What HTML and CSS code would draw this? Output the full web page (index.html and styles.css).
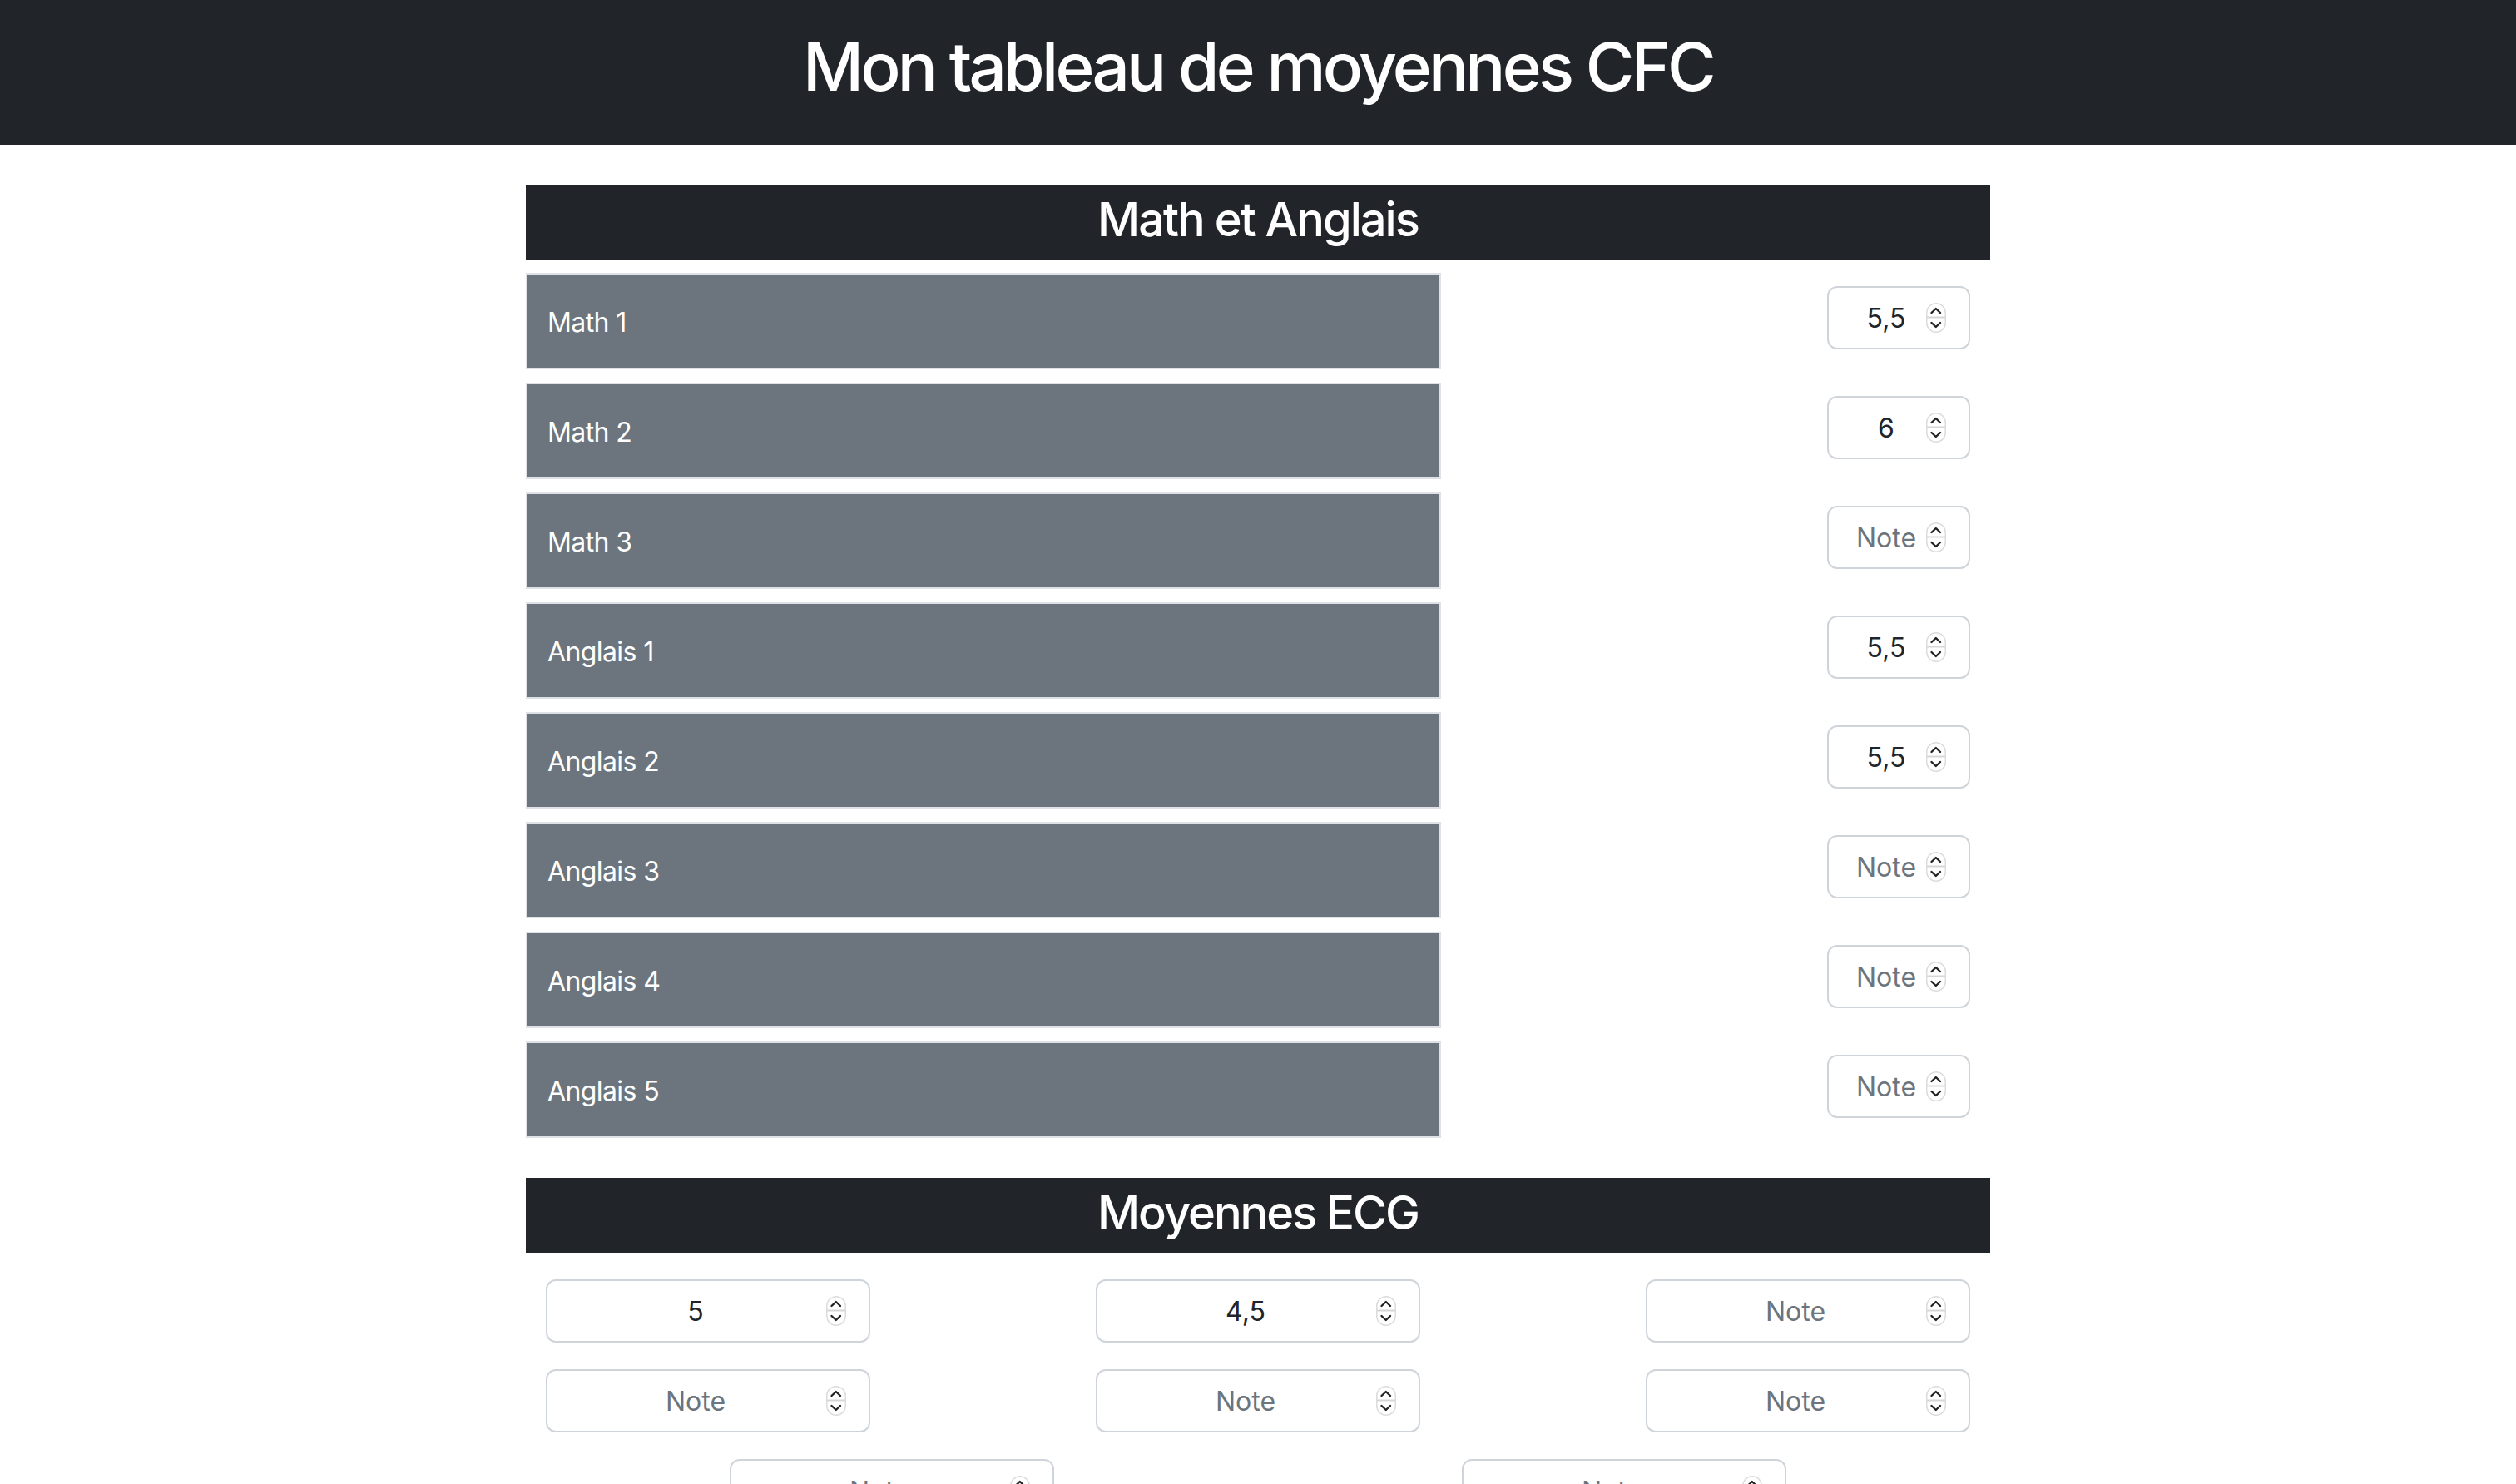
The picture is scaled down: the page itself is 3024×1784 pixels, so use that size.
FILE: index.html
```html
<!DOCTYPE html>
<html lang="fr">
<head>
<meta charset="utf-8">
<title>Mon tableau de moyennes CFC</title>
<link rel="stylesheet" href="styles.css">
</head>
<body>
<header class="topbar">
  <h1 class="title">Mon tableau de moyennes CFC</h1>
</header>
<main class="page">
  <section class="block">
    <h2 class="block-title">Math et Anglais</h2>
    <div class="subject-list">
      <div class="subject-row">
        <div class="subject-label">Math 1</div>
        <div class="note-field small"><input class="note-input" type="text" value="5,5" placeholder="Note"><svg class="spin" viewBox="0 0 24 36"><rect x="0.75" y="0.75" width="22.5" height="34.5" rx="11.25" fill="#fff" stroke="#dcdcdc" stroke-width="1.5"/><line x1="1" y1="17.5" x2="23" y2="17.5" stroke="#d6d6d6" stroke-width="2"/><polyline points="6.5,12 11.8,7 17,12" fill="none" stroke="#222" stroke-width="2.4" stroke-linecap="round" stroke-linejoin="round"/><polyline points="6.5,24 11.8,29 17,24" fill="none" stroke="#222" stroke-width="2.4" stroke-linecap="round" stroke-linejoin="round"/></svg></div>
      </div>
      <div class="subject-row">
        <div class="subject-label">Math 2</div>
        <div class="note-field small"><input class="note-input" type="text" value="6" placeholder="Note"><svg class="spin" viewBox="0 0 24 36"><rect x="0.75" y="0.75" width="22.5" height="34.5" rx="11.25" fill="#fff" stroke="#dcdcdc" stroke-width="1.5"/><line x1="1" y1="17.5" x2="23" y2="17.5" stroke="#d6d6d6" stroke-width="2"/><polyline points="6.5,12 11.8,7 17,12" fill="none" stroke="#222" stroke-width="2.4" stroke-linecap="round" stroke-linejoin="round"/><polyline points="6.5,24 11.8,29 17,24" fill="none" stroke="#222" stroke-width="2.4" stroke-linecap="round" stroke-linejoin="round"/></svg></div>
      </div>
      <div class="subject-row">
        <div class="subject-label">Math 3</div>
        <div class="note-field small"><input class="note-input" type="text" value="" placeholder="Note"><svg class="spin" viewBox="0 0 24 36"><rect x="0.75" y="0.75" width="22.5" height="34.5" rx="11.25" fill="#fff" stroke="#dcdcdc" stroke-width="1.5"/><line x1="1" y1="17.5" x2="23" y2="17.5" stroke="#d6d6d6" stroke-width="2"/><polyline points="6.5,12 11.8,7 17,12" fill="none" stroke="#222" stroke-width="2.4" stroke-linecap="round" stroke-linejoin="round"/><polyline points="6.5,24 11.8,29 17,24" fill="none" stroke="#222" stroke-width="2.4" stroke-linecap="round" stroke-linejoin="round"/></svg></div>
      </div>
      <div class="subject-row">
        <div class="subject-label">Anglais 1</div>
        <div class="note-field small"><input class="note-input" type="text" value="5,5" placeholder="Note"><svg class="spin" viewBox="0 0 24 36"><rect x="0.75" y="0.75" width="22.5" height="34.5" rx="11.25" fill="#fff" stroke="#dcdcdc" stroke-width="1.5"/><line x1="1" y1="17.5" x2="23" y2="17.5" stroke="#d6d6d6" stroke-width="2"/><polyline points="6.5,12 11.8,7 17,12" fill="none" stroke="#222" stroke-width="2.4" stroke-linecap="round" stroke-linejoin="round"/><polyline points="6.5,24 11.8,29 17,24" fill="none" stroke="#222" stroke-width="2.4" stroke-linecap="round" stroke-linejoin="round"/></svg></div>
      </div>
      <div class="subject-row">
        <div class="subject-label">Anglais 2</div>
        <div class="note-field small"><input class="note-input" type="text" value="5,5" placeholder="Note"><svg class="spin" viewBox="0 0 24 36"><rect x="0.75" y="0.75" width="22.5" height="34.5" rx="11.25" fill="#fff" stroke="#dcdcdc" stroke-width="1.5"/><line x1="1" y1="17.5" x2="23" y2="17.5" stroke="#d6d6d6" stroke-width="2"/><polyline points="6.5,12 11.8,7 17,12" fill="none" stroke="#222" stroke-width="2.4" stroke-linecap="round" stroke-linejoin="round"/><polyline points="6.5,24 11.8,29 17,24" fill="none" stroke="#222" stroke-width="2.4" stroke-linecap="round" stroke-linejoin="round"/></svg></div>
      </div>
      <div class="subject-row">
        <div class="subject-label">Anglais 3</div>
        <div class="note-field small"><input class="note-input" type="text" value="" placeholder="Note"><svg class="spin" viewBox="0 0 24 36"><rect x="0.75" y="0.75" width="22.5" height="34.5" rx="11.25" fill="#fff" stroke="#dcdcdc" stroke-width="1.5"/><line x1="1" y1="17.5" x2="23" y2="17.5" stroke="#d6d6d6" stroke-width="2"/><polyline points="6.5,12 11.8,7 17,12" fill="none" stroke="#222" stroke-width="2.4" stroke-linecap="round" stroke-linejoin="round"/><polyline points="6.5,24 11.8,29 17,24" fill="none" stroke="#222" stroke-width="2.4" stroke-linecap="round" stroke-linejoin="round"/></svg></div>
      </div>
      <div class="subject-row">
        <div class="subject-label">Anglais 4</div>
        <div class="note-field small"><input class="note-input" type="text" value="" placeholder="Note"><svg class="spin" viewBox="0 0 24 36"><rect x="0.75" y="0.75" width="22.5" height="34.5" rx="11.25" fill="#fff" stroke="#dcdcdc" stroke-width="1.5"/><line x1="1" y1="17.5" x2="23" y2="17.5" stroke="#d6d6d6" stroke-width="2"/><polyline points="6.5,12 11.8,7 17,12" fill="none" stroke="#222" stroke-width="2.4" stroke-linecap="round" stroke-linejoin="round"/><polyline points="6.5,24 11.8,29 17,24" fill="none" stroke="#222" stroke-width="2.4" stroke-linecap="round" stroke-linejoin="round"/></svg></div>
      </div>
      <div class="subject-row">
        <div class="subject-label">Anglais 5</div>
        <div class="note-field small"><input class="note-input" type="text" value="" placeholder="Note"><svg class="spin" viewBox="0 0 24 36"><rect x="0.75" y="0.75" width="22.5" height="34.5" rx="11.25" fill="#fff" stroke="#dcdcdc" stroke-width="1.5"/><line x1="1" y1="17.5" x2="23" y2="17.5" stroke="#d6d6d6" stroke-width="2"/><polyline points="6.5,12 11.8,7 17,12" fill="none" stroke="#222" stroke-width="2.4" stroke-linecap="round" stroke-linejoin="round"/><polyline points="6.5,24 11.8,29 17,24" fill="none" stroke="#222" stroke-width="2.4" stroke-linecap="round" stroke-linejoin="round"/></svg></div>
      </div>
    </div>
  </section>

  <section class="block">
    <h2 class="block-title">Moyennes ECG</h2>
    <div class="ecg-grid">
      <div class="ecg-row three">
        <div class="note-field wide"><input class="note-input" type="text" value="5" placeholder="Note"><svg class="spin" viewBox="0 0 24 36"><rect x="0.75" y="0.75" width="22.5" height="34.5" rx="11.25" fill="#fff" stroke="#dcdcdc" stroke-width="1.5"/><line x1="1" y1="17.5" x2="23" y2="17.5" stroke="#d6d6d6" stroke-width="2"/><polyline points="6.5,12 11.8,7 17,12" fill="none" stroke="#222" stroke-width="2.4" stroke-linecap="round" stroke-linejoin="round"/><polyline points="6.5,24 11.8,29 17,24" fill="none" stroke="#222" stroke-width="2.4" stroke-linecap="round" stroke-linejoin="round"/></svg></div>
        <div class="note-field wide"><input class="note-input" type="text" value="4,5" placeholder="Note"><svg class="spin" viewBox="0 0 24 36"><rect x="0.75" y="0.75" width="22.5" height="34.5" rx="11.25" fill="#fff" stroke="#dcdcdc" stroke-width="1.5"/><line x1="1" y1="17.5" x2="23" y2="17.5" stroke="#d6d6d6" stroke-width="2"/><polyline points="6.5,12 11.8,7 17,12" fill="none" stroke="#222" stroke-width="2.4" stroke-linecap="round" stroke-linejoin="round"/><polyline points="6.5,24 11.8,29 17,24" fill="none" stroke="#222" stroke-width="2.4" stroke-linecap="round" stroke-linejoin="round"/></svg></div>
        <div class="note-field wide"><input class="note-input" type="text" value="" placeholder="Note"><svg class="spin" viewBox="0 0 24 36"><rect x="0.75" y="0.75" width="22.5" height="34.5" rx="11.25" fill="#fff" stroke="#dcdcdc" stroke-width="1.5"/><line x1="1" y1="17.5" x2="23" y2="17.5" stroke="#d6d6d6" stroke-width="2"/><polyline points="6.5,12 11.8,7 17,12" fill="none" stroke="#222" stroke-width="2.4" stroke-linecap="round" stroke-linejoin="round"/><polyline points="6.5,24 11.8,29 17,24" fill="none" stroke="#222" stroke-width="2.4" stroke-linecap="round" stroke-linejoin="round"/></svg></div>
      </div>
      <div class="ecg-row three">
        <div class="note-field wide"><input class="note-input" type="text" value="" placeholder="Note"><svg class="spin" viewBox="0 0 24 36"><rect x="0.75" y="0.75" width="22.5" height="34.5" rx="11.25" fill="#fff" stroke="#dcdcdc" stroke-width="1.5"/><line x1="1" y1="17.5" x2="23" y2="17.5" stroke="#d6d6d6" stroke-width="2"/><polyline points="6.5,12 11.8,7 17,12" fill="none" stroke="#222" stroke-width="2.4" stroke-linecap="round" stroke-linejoin="round"/><polyline points="6.5,24 11.8,29 17,24" fill="none" stroke="#222" stroke-width="2.4" stroke-linecap="round" stroke-linejoin="round"/></svg></div>
        <div class="note-field wide"><input class="note-input" type="text" value="" placeholder="Note"><svg class="spin" viewBox="0 0 24 36"><rect x="0.75" y="0.75" width="22.5" height="34.5" rx="11.25" fill="#fff" stroke="#dcdcdc" stroke-width="1.5"/><line x1="1" y1="17.5" x2="23" y2="17.5" stroke="#d6d6d6" stroke-width="2"/><polyline points="6.5,12 11.8,7 17,12" fill="none" stroke="#222" stroke-width="2.4" stroke-linecap="round" stroke-linejoin="round"/><polyline points="6.5,24 11.8,29 17,24" fill="none" stroke="#222" stroke-width="2.4" stroke-linecap="round" stroke-linejoin="round"/></svg></div>
        <div class="note-field wide"><input class="note-input" type="text" value="" placeholder="Note"><svg class="spin" viewBox="0 0 24 36"><rect x="0.75" y="0.75" width="22.5" height="34.5" rx="11.25" fill="#fff" stroke="#dcdcdc" stroke-width="1.5"/><line x1="1" y1="17.5" x2="23" y2="17.5" stroke="#d6d6d6" stroke-width="2"/><polyline points="6.5,12 11.8,7 17,12" fill="none" stroke="#222" stroke-width="2.4" stroke-linecap="round" stroke-linejoin="round"/><polyline points="6.5,24 11.8,29 17,24" fill="none" stroke="#222" stroke-width="2.4" stroke-linecap="round" stroke-linejoin="round"/></svg></div>
      </div>
      <div class="ecg-row two">
        <div class="note-field wide"><input class="note-input" type="text" value="" placeholder="Note"><svg class="spin" viewBox="0 0 24 36"><rect x="0.75" y="0.75" width="22.5" height="34.5" rx="11.25" fill="#fff" stroke="#dcdcdc" stroke-width="1.5"/><line x1="1" y1="17.5" x2="23" y2="17.5" stroke="#d6d6d6" stroke-width="2"/><polyline points="6.5,12 11.8,7 17,12" fill="none" stroke="#222" stroke-width="2.4" stroke-linecap="round" stroke-linejoin="round"/><polyline points="6.5,24 11.8,29 17,24" fill="none" stroke="#222" stroke-width="2.4" stroke-linecap="round" stroke-linejoin="round"/></svg></div>
        <div class="note-field wide"><input class="note-input" type="text" value="" placeholder="Note"><svg class="spin" viewBox="0 0 24 36"><rect x="0.75" y="0.75" width="22.5" height="34.5" rx="11.25" fill="#fff" stroke="#dcdcdc" stroke-width="1.5"/><line x1="1" y1="17.5" x2="23" y2="17.5" stroke="#d6d6d6" stroke-width="2"/><polyline points="6.5,12 11.8,7 17,12" fill="none" stroke="#222" stroke-width="2.4" stroke-linecap="round" stroke-linejoin="round"/><polyline points="6.5,24 11.8,29 17,24" fill="none" stroke="#222" stroke-width="2.4" stroke-linecap="round" stroke-linejoin="round"/></svg></div>
      </div>
    </div>
  </section>
</main>
</body>
</html>
```

FILE: styles.css
```css
* {
  box-sizing: border-box;
}

html, body {
  margin: 0;
  padding: 0;
  background: #ffffff;
  font-family: Inter, "Noto Sans", "Liberation Sans", sans-serif;
  color: #212529;
}

.topbar {
  background: #212529;
  height: 174px;
  padding-top: 32px;
  text-align: center;
}

.title {
  margin: 0;
  color: #ffffff;
  font-size: 80px;
  font-weight: 500;
  line-height: 96px;
  letter-spacing: -3.75px;
}

.page {
  width: 1760px;
  margin: 48px auto 0;
}

.block + .block {
  margin-top: 48px;
}

.block-title {
  margin: 0;
  height: 90px;
  padding-top: 8px;
  background: #212529;
  color: #ffffff;
  text-align: center;
  font-size: 56px;
  font-weight: 500;
  line-height: 68px;
  letter-spacing: -2px;
}

.subject-list {
  display: flex;
  flex-direction: column;
  gap: 16px;
  margin-top: 16px;
}

.subject-row {
  display: flex;
  align-items: flex-start;
  justify-content: space-between;
}

.subject-label {
  width: 1100px;
  height: 116px;
  background: #6c757d;
  border: 2px solid #dee2e6;
  color: #ffffff;
  padding: 34px 24px 30px;
  font-size: 32px;
  line-height: 48px;
  letter-spacing: -0.6px;
}

.note-field {
  display: flex;
  align-items: center;
  height: 76px;
  padding: 0 27px 0 24px;
  border: 2px solid #ced4da;
  border-radius: 12px;
  background: #ffffff;
}

.note-field.small {
  width: 172px;
  margin-top: 16px;
  margin-right: 24px;
}

.note-field.wide {
  width: 390px;
}

.note-input {
  flex: 1;
  min-width: 0;
  width: 0;
  border: none;
  outline: none;
  padding: 0;
  margin: 2px 3px 0 0;
  background: transparent;
  font-family: inherit;
  font-size: 32px;
  line-height: 48px;
  height: 48px;
  color: #212529;
  text-align: center;
}

.note-input::placeholder {
  color: #6c757d;
  opacity: 1;
}

.spin {
  flex: none;
  width: 24px;
  height: 36px;
}

.ecg-grid {
  display: flex;
  flex-direction: column;
  gap: 32px;
  margin-top: 32px;
}

.ecg-row {
  display: flex;
}

.ecg-row.three {
  justify-content: space-between;
  padding: 0 24px;
}

.ecg-row.two {
  justify-content: space-around;
}
```
